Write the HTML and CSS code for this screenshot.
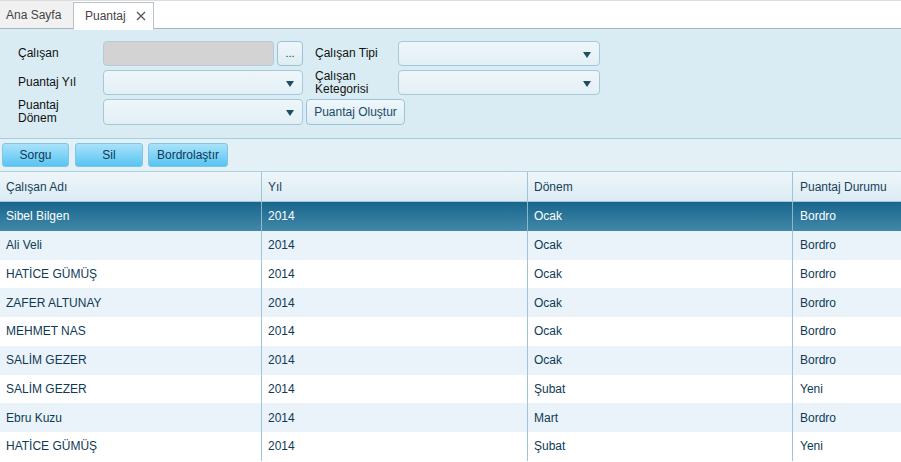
FILE: index.html
```html
<!DOCTYPE html>
<html lang="tr">
<head>
<meta charset="utf-8">
<title>Puantaj</title>
<link rel="stylesheet" href="styles.css">
</head>
<body>
<div class="tabbar">
  <div class="tab">Ana Sayfa</div>
  <div class="tab active">Puantaj <svg class="close" width="10" height="10" viewBox="0 0 10 10"><path d="M1 1L9 9M9 1L1 9" stroke="#555" stroke-width="1.3" fill="none"/></svg></div>
</div>
<div class="form">
  <div class="lbl">Çalışan</div>
  <div class="field pick">
    <div class="input disabled"></div>
    <div class="btn small">...</div>
  </div>
  <div class="lbl">Çalışan Tipi</div>
  <div class="field"><div class="select"><span class="arrow"></span></div></div>

  <div class="lbl">Puantaj Yıl</div>
  <div class="field"><div class="select"><span class="arrow"></span></div></div>
  <div class="lbl two">Çalışan<br>Ketegorisi</div>
  <div class="field"><div class="select"><span class="arrow"></span></div></div>

  <div class="lbl two">Puantaj<br>Dönem</div>
  <div class="field"><div class="select"><span class="arrow"></span></div></div>
  <div class="field span2"><div class="btn gen">Puantaj Oluştur</div></div>
</div>
<div class="toolbar">
  <div class="tbtn w1">Sorgu</div>
  <div class="tbtn w2">Sil</div>
  <div class="tbtn w3">Bordrolaştır</div>
</div>
<div class="grid">
  <div class="row head">
    <div class="c c1">Çalışan Adı</div><div class="c c2">Yıl</div><div class="c c3">Dönem</div><div class="c c4">Puantaj Durumu</div>
  </div>
  <div class="row sel">
    <div class="c c1">Sibel Bilgen</div><div class="c c2">2014</div><div class="c c3">Ocak</div><div class="c c4">Bordro</div>
  </div>
  <div class="row alt">
    <div class="c c1">Ali Veli</div><div class="c c2">2014</div><div class="c c3">Ocak</div><div class="c c4">Bordro</div>
  </div>
  <div class="row">
    <div class="c c1">HATİCE GÜMÜŞ</div><div class="c c2">2014</div><div class="c c3">Ocak</div><div class="c c4">Bordro</div>
  </div>
  <div class="row alt">
    <div class="c c1">ZAFER ALTUNAY</div><div class="c c2">2014</div><div class="c c3">Ocak</div><div class="c c4">Bordro</div>
  </div>
  <div class="row">
    <div class="c c1">MEHMET NAS</div><div class="c c2">2014</div><div class="c c3">Ocak</div><div class="c c4">Bordro</div>
  </div>
  <div class="row alt">
    <div class="c c1">SALİM GEZER</div><div class="c c2">2014</div><div class="c c3">Ocak</div><div class="c c4">Bordro</div>
  </div>
  <div class="row">
    <div class="c c1">SALİM GEZER</div><div class="c c2">2014</div><div class="c c3">Şubat</div><div class="c c4">Yeni</div>
  </div>
  <div class="row alt">
    <div class="c c1">Ebru Kuzu</div><div class="c c2">2014</div><div class="c c3">Mart</div><div class="c c4">Bordro</div>
  </div>
  <div class="row">
    <div class="c c1">HATİCE GÜMÜŞ</div><div class="c c2">2014</div><div class="c c3">Şubat</div><div class="c c4">Yeni</div>
  </div>
</div>
</body>
</html>
```
FILE: styles.css
```css
* { box-sizing: border-box; }
html, body { margin: 0; padding: 0; }
body {
  width: 901px;
  height: 462px;
  overflow: hidden;
  background: #fff;
  font-family: "Liberation Sans", Arial, sans-serif;
  font-size: 12px;
  color: #0f3a55;
}
.tabbar {
  height: 29px;
  display: flex;
  align-items: stretch;
  border-top: 1px solid #dcdcdc;
  border-bottom: 1px solid #a9b6c0;
  background: #fff;
}
.tab {
  width: 73px;
  padding-left: 6px;
  display: flex;
  align-items: center;
  background: #f1f1f1;
  color: #444;
  font-size: 12px;
  margin-bottom: -1px;
  border-bottom: 1px solid #a9b6c0;
}
.tab.active {
  width: 81px;
  background: #fff;
  border: 1px solid #b6c3cd;
  border-bottom: 1px solid #fff;
  padding-left: 11px;
  margin-top: 1px;
  height: 28px;
}
.close {
  margin-left: 10px;
  margin-top: -1px;
}
.form {
  height: 110px;
  background: #d9ecf3;
  border-bottom: 1px solid #a5cde0;
  padding: 12px 0 0 18px;
  display: grid;
  grid-template-columns: 85px 200px 12px 83px 202px;
  grid-template-rows: 25px 25px 26px;
  row-gap: 4px;
  align-items: center;
}
.form .lbl { color: #111; font-size: 12px; line-height: 13px; }
.form .lbl:nth-child(3), .form .lbl:nth-child(7) { grid-column: 4; }
.form .field { height: 100%; }
.form .field:nth-child(4), .form .field:nth-child(8) { grid-column: 5; }
.form .span2 { grid-column: 3 / span 3; padding-left: 3px; }
.pick { display: flex; gap: 3px; }
.input {
  height: 100%;
  flex: 0 0 171px;
  border: 1px solid #b5cbd6;
  border-radius: 4px;
}
.input.disabled { background: #d3d3d3; }
.btn {
  height: 100%;
  border: 1px solid #9cc3d5;
  border-radius: 4px;
  background: linear-gradient(#eef7fb, #dcedf4);
  color: #1b4a66;
  display: flex;
  align-items: center;
  justify-content: center;
}
.btn.small { width: 26px; font-size: 11px; color: #333; padding-bottom: 2px; }
.btn.gen { width: 99px; font-size: 12px; }
.select {
  height: 100%;
  border: 1px solid #a6c9da;
  border-radius: 4px;
  background: linear-gradient(#eef6fa, #e2f0f6);
  position: relative;
}
.arrow {
  position: absolute;
  right: 8px;
  top: 10px;
  width: 0;
  height: 0;
  border-left: 4px solid transparent;
  border-right: 4px solid transparent;
  border-top: 6px solid #1d4e66;
}
.toolbar {
  height: 33px;
  background: #e3f1f7;
  border-bottom: 1px solid #a9cfe0;
  display: flex;
  align-items: flex-start;
  padding: 4px 0 0 2px;
}
.tbtn {
  height: 24px;
  border: 1px solid #7fc5e4;
  border-radius: 3px;
  background: linear-gradient(#a9e2fa, #58c4f2);
  color: #0f3a55;
  display: flex;
  align-items: center;
  justify-content: center;
  font-size: 12px;
  margin-right: 6px;
}
.tbtn.w1 { width: 67px; }
.tbtn.w2 { width: 68px; margin-right: 5px; }
.tbtn.w3 { width: 80px; }
.grid { display: flex; flex-direction: column; }
.row {
  display: grid;
  grid-template-columns: 262px 266px 265px 108px;
  height: 28.75px;
  background: #fff;
}
.row.alt { background: #e9f3f9; }
.row.head {
  height: 30px;
  background: linear-gradient(#eef6fa, #dcebf3);
  border-bottom: 1px solid #a3c9da;
  color: #163f5a;
}
.row.sel {
  background: linear-gradient(#19658d, #4189a9);
  color: #fff;
}
.c {
  display: flex;
  align-items: center;
  padding-left: 6px;
  border-right: 1px solid #9fc6d8;
  white-space: nowrap;
  overflow: hidden;
}
.c4 { border-right: none; padding-left: 7px; }
.row.sel .c { border-right-color: #8fb5c8; }
.row.sel .c4 { border-right: none; }
```
